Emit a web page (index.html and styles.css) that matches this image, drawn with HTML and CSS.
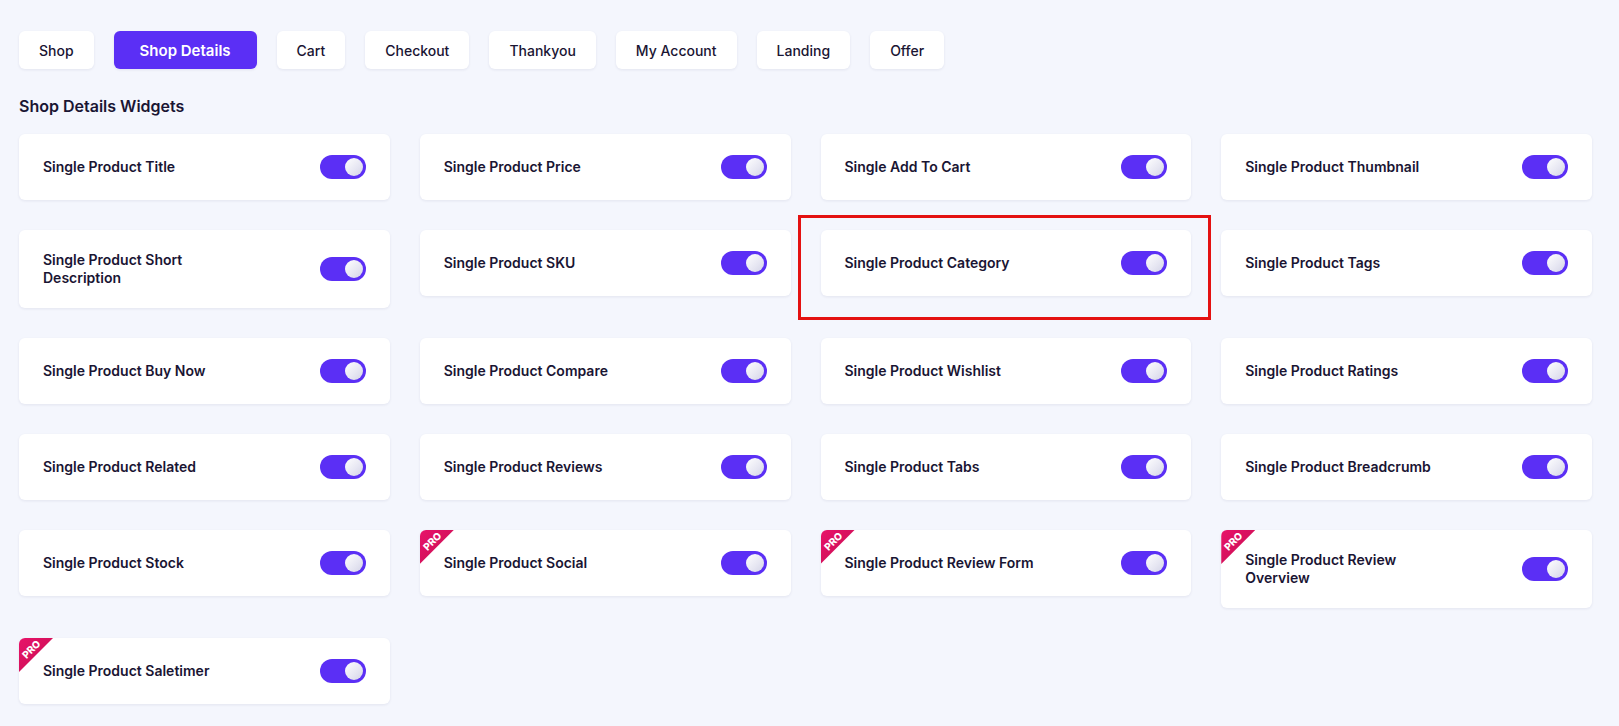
FILE: index.html
```html
<!DOCTYPE html>
<html lang="en">
<head>
<meta charset="utf-8">
<title>Shop Details Widgets</title>
<link rel="stylesheet" href="styles.css">
</head>
<body>
<div class="page">
  <nav class="tabs">
    <button class="tab">Shop</button>
    <button class="tab active">Shop Details</button>
    <button class="tab">Cart</button>
    <button class="tab">Checkout</button>
    <button class="tab">Thankyou</button>
    <button class="tab">My Account</button>
    <button class="tab">Landing</button>
    <button class="tab">Offer</button>
  </nav>
  <h2 class="section-title">Shop Details Widgets</h2>
  <div class="grid">
    <div class="card"><span class="label">Single Product Title</span><span class="toggle"><span class="knob"></span></span></div>
    <div class="card"><span class="label">Single Product Price</span><span class="toggle"><span class="knob"></span></span></div>
    <div class="card"><span class="label">Single Add To Cart</span><span class="toggle"><span class="knob"></span></span></div>
    <div class="card"><span class="label">Single Product Thumbnail</span><span class="toggle"><span class="knob"></span></span></div>

    <div class="card"><span class="label">Single Product Short Description</span><span class="toggle"><span class="knob"></span></span></div>
    <div class="card"><span class="label">Single Product SKU</span><span class="toggle"><span class="knob"></span></span></div>
    <div class="card"><span class="label">Single Product Category</span><span class="toggle"><span class="knob"></span></span><span class="highlight"></span></div>
    <div class="card"><span class="label">Single Product Tags</span><span class="toggle"><span class="knob"></span></span></div>

    <div class="card"><span class="label">Single Product Buy Now</span><span class="toggle"><span class="knob"></span></span></div>
    <div class="card"><span class="label">Single Product Compare</span><span class="toggle"><span class="knob"></span></span></div>
    <div class="card"><span class="label">Single Product Wishlist</span><span class="toggle"><span class="knob"></span></span></div>
    <div class="card"><span class="label">Single Product Ratings</span><span class="toggle"><span class="knob"></span></span></div>

    <div class="card"><span class="label">Single Product Related</span><span class="toggle"><span class="knob"></span></span></div>
    <div class="card"><span class="label">Single Product Reviews</span><span class="toggle"><span class="knob"></span></span></div>
    <div class="card"><span class="label">Single Product Tabs</span><span class="toggle"><span class="knob"></span></span></div>
    <div class="card"><span class="label">Single Product Breadcrumb</span><span class="toggle"><span class="knob"></span></span></div>

    <div class="card"><span class="label">Single Product Stock</span><span class="toggle"><span class="knob"></span></span></div>
    <div class="card"><span class="pro"><span class="pro-text">PRO</span></span><span class="label">Single Product Social</span><span class="toggle"><span class="knob"></span></span></div>
    <div class="card"><span class="pro"><span class="pro-text">PRO</span></span><span class="label">Single Product Review Form</span><span class="toggle"><span class="knob"></span></span></div>
    <div class="card"><span class="pro"><span class="pro-text">PRO</span></span><span class="label">Single Product Review Overview</span><span class="toggle"><span class="knob"></span></span></div>

    <div class="card"><span class="pro"><span class="pro-text">PRO</span></span><span class="label">Single Product Saletimer</span><span class="toggle"><span class="knob"></span></span></div>
  </div>
</div>
</body>
</html>
```

FILE: styles.css
```css
* { box-sizing: border-box; }

html, body {
  margin: 0;
  padding: 0;
  background: #f4f6fd;
}

body {
  font-family: Inter, "Noto Sans", "Liberation Sans", sans-serif;
  color: #1a1533;
}

.page {
  padding: 31px 27px 20px 19px;
}

.tabs {
  display: flex;
  gap: 20px;
}

.tab {
  height: 38px;
  padding: 0 20px;
  border: none;
  border-radius: 6px;
  background: #ffffff;
  box-shadow: 0 1px 3px rgba(30, 30, 80, 0.08);
  font-family: inherit;
  font-size: 14px;
  font-weight: 500;
  color: #1a1533;
  cursor: pointer;
}

.tab.active {
  background: #5b2ff5;
  color: #ffffff;
  font-size: 15px;
  font-weight: 600;
  padding: 0 26px;
}

.section-title {
  margin: 27px 0 18px;
  font-size: 16px;
  line-height: 20px;
  font-weight: 600;
  color: #1a1533;
}

.grid {
  display: grid;
  grid-template-columns: repeat(4, 1fr);
  column-gap: 30px;
  row-gap: 30px;
  align-items: start;
}

.card {
  position: relative;
  display: flex;
  align-items: center;
  justify-content: space-between;
  padding: 21px 24px;
  background: #ffffff;
  border-radius: 6px;
  box-shadow: 0 1px 3px rgba(30, 30, 80, 0.08);
}

.label {
  max-width: 200px;
  font-size: 14px;
  line-height: 18px;
  font-weight: 600;
  color: #1a1533;
}

.toggle {
  flex: none;
  display: flex;
  align-items: center;
  justify-content: flex-end;
  width: 46px;
  height: 24px;
  padding: 0 3px;
  border-radius: 12px;
  background: #5b2ff5;
}

.knob {
  width: 18px;
  height: 18px;
  border-radius: 50%;
  background: linear-gradient(135deg, #ffffff 0%, #e6e6f2 60%, #d3d3e6 100%);
}

.pro {
  position: absolute;
  top: 0;
  left: 0;
  width: 34px;
  height: 34px;
  border-top-left-radius: 6px;
  background: linear-gradient(135deg, #e8136a 0%, #c50f4f 100%);
  clip-path: polygon(0 0, 100% 0, 0 100%);
  overflow: hidden;
}

.pro-text {
  position: absolute;
  left: 0;
  top: 6px;
  width: 24px;
  text-align: center;
  font-size: 10px;
  line-height: 10px;
  font-weight: 800;
  color: #ffffff;
  transform: rotate(-45deg);
}

.highlight {
  position: absolute;
  top: -15px;
  left: -23px;
  right: -20px;
  bottom: -24px;
  border: 3px solid #e41111;
  pointer-events: none;
}
```
